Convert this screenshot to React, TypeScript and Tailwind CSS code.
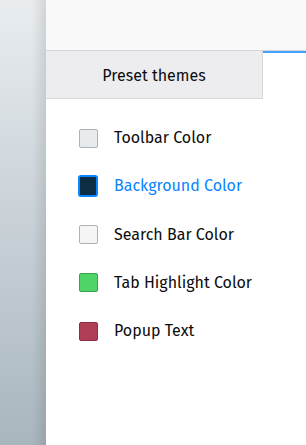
const rows = [
  { label: "Toolbar Color", color: "bg-[#e8ebee]", border: "border-[#b1b1b3]" },
  { label: "Background Color", color: "bg-[#0c2d44]", border: "border-[#0a84ff]", active: true },
  { label: "Search Bar Color", color: "bg-[#f5f5f5]", border: "border-[#b1b1b3]" },
  { label: "Tab Highlight Color", color: "bg-[#4fd567]", border: "border-[#3aa14c]" },
  { label: "Popup Text", color: "bg-[#b03e56]", border: "border-[#8f2d42]" },
];

export default function App() {
  return (
    <div className="flex h-[445px] w-[306px] overflow-hidden font-['Fira_Sans','Open_Sans',sans-serif]">
      {/* sidebar strip */}
      <div className="relative h-full w-[46px] shrink-0 bg-gradient-to-b from-[#e9edf0] to-[#a9b6be]">
        <div className="absolute inset-y-0 right-0 w-[14px] bg-gradient-to-r from-transparent to-black/10" />
      </div>

      <div className="flex flex-1 flex-col bg-white">
        <div className="h-[51px] border-b border-[#d7d7db] bg-[#f9f9fa]" />
        <div className="flex">
          <div className="flex h-[48px] w-[217px] items-center justify-center border-r border-b border-[#d7d7db] bg-[#ededf0] pt-[2px] text-[16px] text-[#0c0c0d]">
            Preset themes
          </div>
          <div className="flex-1">
            <div className="h-[2px] bg-[#45a1ff]" />
          </div>
        </div>

        <div className="flex flex-col gap-[28.3px] pt-[29px] pl-[32px]">
          {rows.map((r) => (
            <div key={r.label} className="flex h-[20px] items-center">
              <div className="flex w-[20px] justify-center">
                {r.active ? (
                  <div className={`h-[22px] w-[22px] rounded-[3px] border-2 ${r.border} ${r.color}`} />
                ) : (
                  <div className={`h-[19px] w-[19px] rounded-[2px] border ${r.border} ${r.color}`} />
                )}
              </div>
              <span
                className={`ml-[16px] text-[16px] ${r.active ? "text-[#0a84ff]" : "text-[#0c0c0d]"}`}
              >
                {r.label}
              </span>
            </div>
          ))}
        </div>
      </div>
    </div>
  );
}
